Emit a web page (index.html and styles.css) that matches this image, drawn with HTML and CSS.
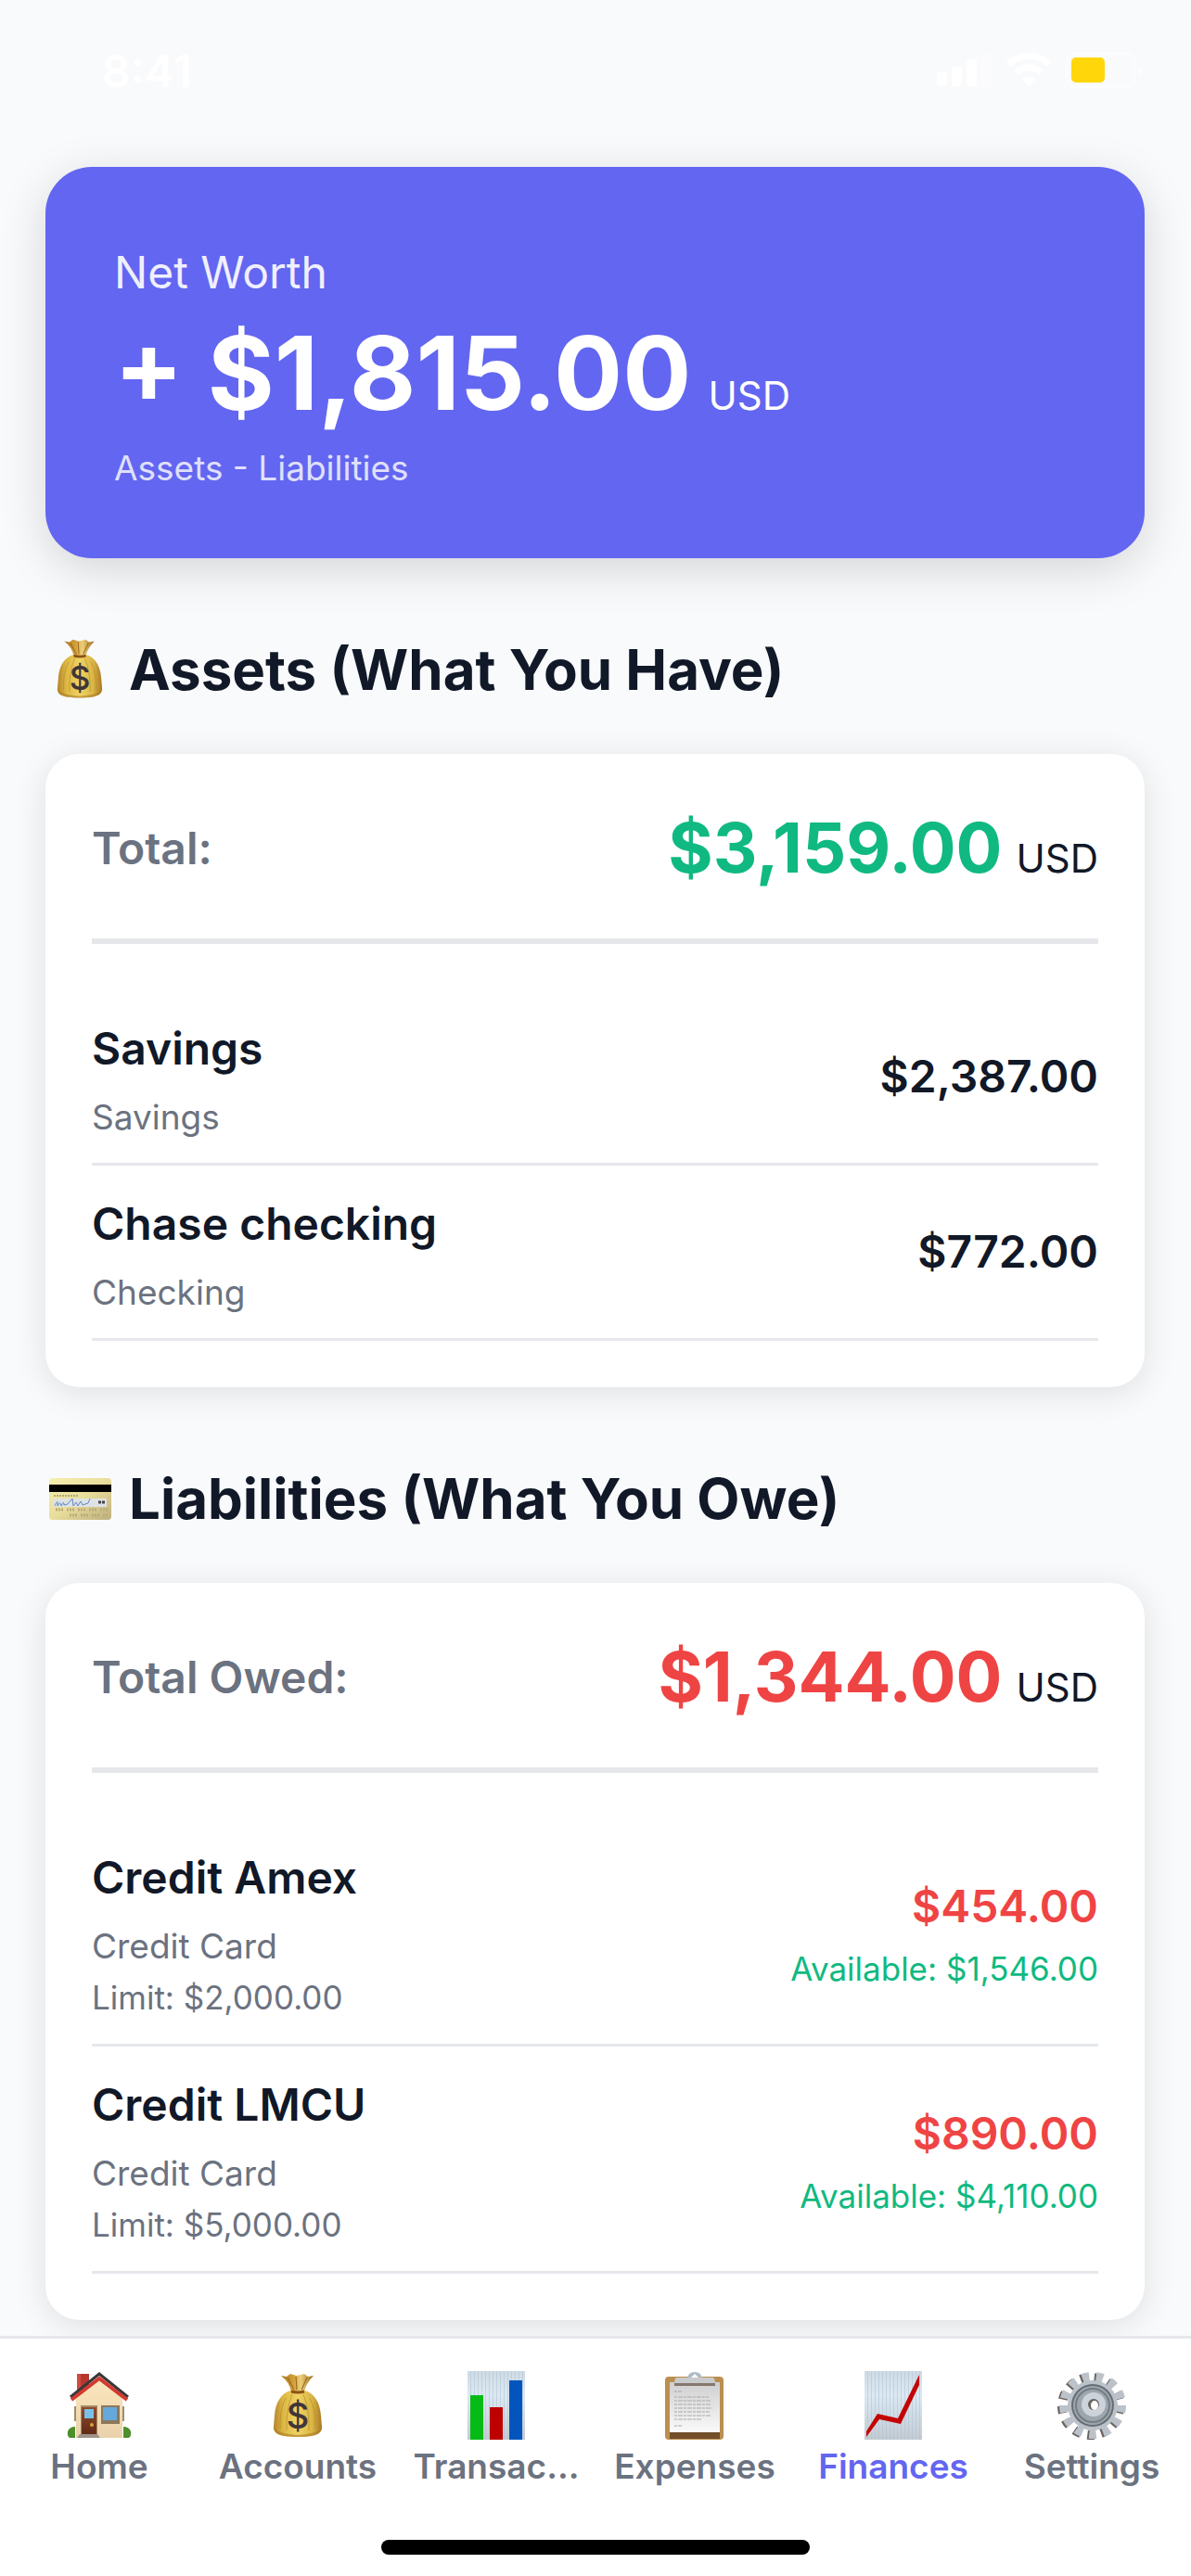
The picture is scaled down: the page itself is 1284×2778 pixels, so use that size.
FILE: index.html
```
<!DOCTYPE html>
<html lang="en">
<head>
  <meta charset="UTF-8">
  <meta name="viewport" content="width=device-width, initial-scale=1.0">
  <title>Finances</title>
  <link rel="stylesheet" href="styles.css">
</head>
<body>

  <header class="status-bar">
    <span class="time">8:41</span>
    <div class="status-icons">
      <svg width="60" height="40" viewBox="0 0 60 40" fill="#fff">
        <rect x="0" y="22" width="11" height="15" rx="3"/>
        <rect x="16" y="16" width="11" height="21" rx="3"/>
        <rect x="32" y="8" width="11" height="29" rx="3"/>
        <rect x="48" y="1" width="11" height="36" rx="3" opacity="0.3"/>
      </svg>
      <svg width="50" height="40" viewBox="0 0 50 40" fill="none" stroke="#fff" stroke-width="7">
        <path d="M3 13 A32 32 0 0 1 47 13"/>
        <path d="M12 22 A19 19 0 0 1 38 22"/>
        <path d="M25 37 L18 30 Q25 23 32 30 Z" fill="#fff" stroke="none"/>
      </svg>
      <svg width="84" height="40" viewBox="0 0 84 40">
        <rect x="2" y="1" width="73" height="37" rx="10" fill="none" stroke="#fff" stroke-width="3" opacity="0.4"/>
        <rect x="7" y="6" width="36" height="27" rx="5" fill="#ffd60a"/>
        <path d="M79 14 Q83 16 83 20 Q83 24 79 26 Z" fill="#fff" opacity="0.5"/>
      </svg>
    </div>
  </header>

  <!-- Shared icon shapes -->
  <svg class="defs" width="0" height="0">
    <defs>
      <linearGradient id="gold" x1="0" x2="1">
        <stop offset="0" stop-color="#b5832a"/>
        <stop offset="0.2" stop-color="#dcb844"/>
        <stop offset="0.5" stop-color="#f0d465"/>
        <stop offset="0.8" stop-color="#d9b544"/>
        <stop offset="1" stop-color="#a97825"/>
      </linearGradient>
      <linearGradient id="neck" x1="0" x2="1">
        <stop offset="0" stop-color="#a87422"/>
        <stop offset="0.4" stop-color="#d6a23a"/>
        <stop offset="0.6" stop-color="#ecd07a"/>
        <stop offset="1" stop-color="#9c6719"/>
      </linearGradient>
      <linearGradient id="paper" x1="0" y1="0" x2="0" y2="1">
        <stop offset="0" stop-color="#cfdbe4"/>
        <stop offset="0.35" stop-color="#dce9f3"/>
        <stop offset="1" stop-color="#c3cbd2"/>
      </linearGradient>
      <linearGradient id="card" x1="0" y1="0" x2="1" y2="1">
        <stop offset="0" stop-color="#f6f0ae"/>
        <stop offset="0.5" stop-color="#e9dd9c"/>
        <stop offset="1" stop-color="#bfae7c"/>
      </linearGradient>
      <linearGradient id="sheet" x1="0" y1="0" x2="0" y2="1">
        <stop offset="0" stop-color="#cfcfcf"/>
        <stop offset="1" stop-color="#fafafa"/>
      </linearGradient>
      <linearGradient id="wall" x1="0" y1="0" x2="0" y2="1">
        <stop offset="0" stop-color="#fbe6bd"/>
        <stop offset="1" stop-color="#e9d2ab"/>
      </linearGradient>
      <linearGradient id="door" x1="0" y1="0" x2="0" y2="1">
        <stop offset="0" stop-color="#8f4b2c"/>
        <stop offset="1" stop-color="#5e2a18"/>
      </linearGradient>
      <pattern id="lines" width="4" height="10" patternUnits="userSpaceOnUse">
        <rect width="1" height="10" fill="#a9c0d2" opacity="0.5"/>
      </pattern>
      <symbol id="bag" viewBox="0 0 80 80">
        <path d="M32 23 H48 C58 26 64 36 65 50 L66 62 C67 70 57 73 40 73 C23 73 13 70 14 62 L15 50 C16 36 22 26 32 23 Z" fill="url(#gold)"/>
        <path d="M15 64 C24 73 56 73 65 64 C66 71 56 73 40 73 C24 73 14 71 15 64 Z" fill="#a87a24" opacity="0.6"/>
        <path d="M27 31 Q20 45 21 64 M34 27 Q27 45 28 66 M53 31 Q60 45 59 64 M46 27 Q53 45 52 66" fill="none" stroke="#b98b28" stroke-width="1" opacity="0.7"/>
        <path d="M22 7 L28 8 L32 5 L39 7 L47 5 L51 8 L57 7 Q49 15 47 24 Q40 27 33 24 Q31 14 22 7 Z" fill="url(#neck)"/>
        <path d="M29 9 L36 22 M38 8 L39 22 M50 9 L44 22" fill="none" stroke="#92611a" stroke-width="1"/>
        <path d="M33 24 Q40 26 47 24" fill="none" stroke="#8a5416" stroke-width="3"/>
        <text x="40" y="64" text-anchor="middle" class="bag-sign">$</text>
      </symbol>
    </defs>
  </svg>

  <main class="content">
    <section class="net-worth">
      <p class="net-label">Net Worth</p>
      <p class="net-amount"><b>+ $1,815.00</b> <span class="currency">USD</span></p>
      <p class="net-note">Assets - Liabilities</p>
    </section>

    <h2><svg class="title-icon" aria-hidden="true"><use href="#bag"/></svg>Assets (What You Have)</h2>
    <section class="card">
      <div class="total">
        <span class="total-label">Total:</span>
        <span class="total-value"><b class="green">$3,159.00</b> <span class="currency">USD</span></span>
      </div>
      <ul class="rows">
        <li>
          <div>
            <p class="name">Savings</p>
            <p class="type">Savings</p>
          </div>
          <p class="amount">$2,387.00</p>
        </li>
        <li>
          <div>
            <p class="name">Chase checking</p>
            <p class="type">Checking</p>
          </div>
          <p class="amount">$772.00</p>
        </li>
      </ul>
    </section>

    <h2>
      <svg class="title-icon" viewBox="0 0 74 74" aria-hidden="true">
        <rect x="4" y="15" width="67" height="45" rx="4" fill="url(#card)"/>
        <rect x="4" y="22" width="67" height="8" fill="#000"/>
        <path d="M9 34 H36" stroke="#b4a974" stroke-width="2" stroke-dasharray="2 1"/>
        <rect x="8" y="37" width="58" height="9" fill="#dfe2e4"/>
        <path d="M10 45 Q14 36 13 45 Q16 39 17 45 Q20 38 20 44 L24 43 L29 37 L30 45 L33 41 L35 45 L38 40 L40 44 L46 42 L48 37" fill="none" stroke="#5f8bc9" stroke-width="1"/>
        <path d="M57 41 H65" stroke="#444" stroke-width="3" stroke-dasharray="3 1"/>
        <path d="M11 49 H67 M26 55 H67" stroke="#b9ac7c" stroke-width="3" stroke-dasharray="2 1 2 1 2 4"/>
      </svg>Liabilities (What You Owe)
    </h2>
    <section class="card">
      <div class="total">
        <span class="total-label">Total Owed:</span>
        <span class="total-value"><b class="red">$1,344.00</b> <span class="currency">USD</span></span>
      </div>
      <ul class="rows">
        <li>
          <div>
            <p class="name">Credit Amex</p>
            <p class="type">Credit Card</p>
            <p class="limit">Limit: $2,000.00</p>
          </div>
          <div class="owed">
            <p class="amount red">$454.00</p>
            <p class="available">Available: $1,546.00</p>
          </div>
        </li>
        <li>
          <div>
            <p class="name">Credit LMCU</p>
            <p class="type">Credit Card</p>
            <p class="limit">Limit: $5,000.00</p>
          </div>
          <div class="owed">
            <p class="amount red">$890.00</p>
            <p class="available">Available: $4,110.00</p>
          </div>
        </li>
      </ul>
    </section>
  </main>

  <footer class="tab-bar">
    <nav class="tabs">
      <a href="#home">
        <svg viewBox="0 0 80 80" aria-hidden="true">
          <path d="M16 5 H29 V20 L16 29 Z" fill="#b5372f"/>
          <path d="M16 5 H20 V27 L16 29 Z" fill="#d14b3f"/>
          <path d="M13 40 H15 V56 H13 Z M65 40 H67 V56 H65 Z" fill="#a18b6d"/>
          <path d="M15 30 L40 11 L65 30 V74 H15 Z" fill="url(#wall)"/>
          <path d="M9 30 L40 5 L71 30" fill="none" stroke="#3a3638" stroke-width="3"/>
          <path d="M10 33 L40 10 L70 33" fill="none" stroke="#d23a30" stroke-width="4"/>
          <rect x="20" y="39" width="18" height="31" fill="#a98963"/>
          <rect x="21" y="41" width="16" height="30" fill="url(#door)"/>
          <rect x="24" y="43" width="10" height="10" fill="#79c0ea"/>
          <circle cx="32" cy="60" r="2" fill="#d9a13a"/>
          <rect x="42" y="39" width="20" height="20" fill="#8d775b"/>
          <rect x="44" y="41" width="15" height="14" fill="#65a9dc"/>
          <path d="M16 74 L19 70 H38 L41 74 Z" fill="#9d9389"/>
          <path d="M14 62 V74 H8 Q5 72 6 67 Q8 62 14 62 Z M66 62 V74 H72 Q75 72 74 67 Q72 62 66 62 Z" fill="#4d8f2c"/>
        </svg>
        <span>Home</span>
      </a>
      <a href="#accounts">
        <svg aria-hidden="true"><use href="#bag"/></svg>
        <span>Accounts</span>
      </a>
      <a href="#transactions">
        <svg viewBox="0 0 80 80" aria-hidden="true">
          <rect x="9" y="2" width="62" height="74" fill="url(#paper)"/>
          <rect x="9" y="2" width="62" height="74" fill="url(#lines)"/>
          <rect x="12" y="28" width="14" height="48" fill="#06bb16"/>
          <rect x="33" y="41" width="14" height="35" fill="#bd0000"/>
          <rect x="54" y="12" width="14" height="64" fill="#0355bd"/>
        </svg>
        <span>Transac...</span>
      </a>
      <a href="#expenses">
        <svg viewBox="0 0 80 80" aria-hidden="true">
          <rect x="8" y="8" width="63" height="68" rx="4" fill="#bb8f4f"/>
          <rect x="13" y="68" width="54" height="7" fill="#73502a"/>
          <rect x="13" y="14" width="54" height="54" fill="url(#sheet)"/>
          <path d="M18 24 H26 M18 30 H55 M18 34 H57 M18 38 H58 M18 42 H59 M18 46 H56 M18 50 H58 M18 54 H48 M18 61 H26" stroke="#aaa" stroke-width="2" stroke-dasharray="3 1 5 1" opacity="0.5"/>
          <path d="M32 10 Q33 3 40 3 Q47 3 48 10 Z" fill="#aebbc4"/>
          <path d="M36 9 L40 5 L44 9 Z" fill="#fff"/>
          <path d="M20 9 H60 Q62 10 62 17 H18 Q18 10 20 9 Z" fill="#c9cacb"/>
          <path d="M18 15 H62 V18 H18 Z" fill="#85776e"/>
        </svg>
        <span>Expenses</span>
      </a>
      <a href="#finances" class="active" aria-current="page">
        <svg viewBox="0 0 80 80" aria-hidden="true">
          <rect x="9" y="2" width="62" height="74" fill="url(#paper)"/>
          <rect x="9" y="2" width="62" height="74" fill="url(#lines)"/>
          <path d="M11 67 L23 48 L45 53 L68 6 V17 L48 59 L25 54 L11 73 Z" fill="#c40404"/>
        </svg>
        <span>Finances</span>
      </a>
      <a href="#settings">
        <svg viewBox="0 0 80 80" aria-hidden="true">
          <circle cx="39" cy="40" r="31" fill="none" stroke="#6a625e" stroke-width="10" pathLength="26" stroke-dasharray="1 1"/>
          <circle cx="41" cy="39" r="31" fill="none" stroke="#bcc2ca" stroke-width="10" pathLength="26" stroke-dasharray="1 1"/>
          <circle cx="41" cy="39" r="27" fill="#bbc1c8"/>
          <circle cx="41" cy="39" r="23" fill="#666d74"/>
          <circle cx="41" cy="39" r="21" fill="#9da5ad"/>
          <circle cx="41" cy="39" r="18" fill="none" stroke="#747c84" stroke-width="2"/>
          <circle cx="42" cy="38" r="13" fill="#cdd3da"/>
          <circle cx="42" cy="38" r="6" fill="#68635d"/>
          <ellipse cx="43" cy="39" rx="4" ry="5" fill="#fff"/>
        </svg>
        <span>Settings</span>
      </a>
    </nav>
    <div class="home-indicator"></div>
  </footer>

</body>
</html>
```
FILE: styles.css
```
* {
  box-sizing: border-box;
}

body {
  font-family: Inter, 'Liberation Sans', sans-serif;
  background-color: #f9fafc;
  color: #111827;
  margin: 0;
  min-height: 100vh;
  display: flex;
  flex-direction: column;
}

p, h2, ul {
  margin: 0;
  padding: 0;
}

.defs {
  position: absolute;
}

/* status bar */
.status-bar {
  display: flex;
  justify-content: space-between;
  align-items: center;
  height: 152px;
  padding: 0 52px 0 110px;
}

.time {
  color: #fff;
  font-size: 48px;
  font-weight: 600;
}

.status-icons {
  display: flex;
  gap: 14px;
}

.content {
  padding: 28px 50px 17px 49px;
}

/* net worth */
.net-worth {
  background-color: #6366f1;
  color: #fff;
  padding: 74px;
  border-radius: 50px;
  box-shadow: 0 12px 50px rgba(0, 0, 0, 0.15);
}

.net-label {
  font-size: 48px;
  line-height: 80px;
  opacity: 0.9;
}

.net-amount {
  display: flex;
  align-items: baseline;
  gap: 18px;
  font-size: 110px;
  line-height: 132px;
  margin: 2px 0 14px;
}

.net-note {
  font-size: 37px;
  line-height: 46px;
  opacity: 0.8;
}

.currency {
  font-size: 42px;
  line-height: 50px;
}

h2 {
  display: flex;
  align-items: center;
  gap: 16px;
  font-size: 60px;
  font-weight: 700;
  line-height: 74px;
  margin: 83px 0 54px;
}

.title-icon {
  width: 74px;
  height: 74px;
}

.bag-sign {
  font-size: 38px;
  font-weight: 500;
  fill: #40363a;
}

/* cards */
.card {
  background-color: #fff;
  padding: 50px;
  border-radius: 37px;
  box-shadow: 0 6px 36px rgba(0, 0, 0, 0.11);
}

.total {
  display: flex;
  justify-content: space-between;
  align-items: center;
  padding-bottom: 47px;
  border-bottom: 6px solid #e5e7eb;
  margin-bottom: 50px;
}

.total-label {
  font-size: 48px;
  font-weight: 600;
  color: #6b7280;
}

.total-value {
  display: flex;
  align-items: baseline;
  gap: 15px;
  font-size: 74px;
  line-height: 102px;
}

.rows {
  list-style: none;
}

.rows li {
  display: flex;
  justify-content: space-between;
  align-items: center;
  padding: 25px 0;
  border-bottom: 3px solid #e5e7eb;
}

.name, .amount {
  font-size: 48px;
  font-weight: 600;
  line-height: 76px;
}

.type {
  font-size: 37px;
  line-height: 48px;
  margin-top: 12px;
  color: #6b7280;
}

.limit, .available {
  font-size: 35px;
  line-height: 50px;
}

.limit {
  margin-top: 6px;
  color: #6b7280;
}

.owed {
  text-align: right;
}

.available {
  margin-top: 4px;
  color: #10b981;
}

.green {
  color: #10b981;
}

.red {
  color: #ef4444;
}

/* bottom tabs */
.tab-bar {
  position: sticky;
  bottom: 0;
  margin-top: auto;
  background-color: #fff;
  border-top: 3px solid #e5e7eb;
  padding: 33px 0 25px;
}

.tabs {
  display: grid;
  grid-template-columns: repeat(6, 1fr);
}

.tabs a {
  display: flex;
  flex-direction: column;
  align-items: center;
  gap: 3px;
  color: #6b7280;
  font-size: 37px;
  font-weight: 600;
  line-height: 44px;
  text-decoration: none;
}

.tabs svg {
  width: 80px;
  height: 80px;
}

.tabs .active {
  color: #6366f1;
}

.home-indicator {
  width: 36%;
  height: 16px;
  margin: 57px auto 0;
  border-radius: 8px;
  background-color: #000;
}
```
